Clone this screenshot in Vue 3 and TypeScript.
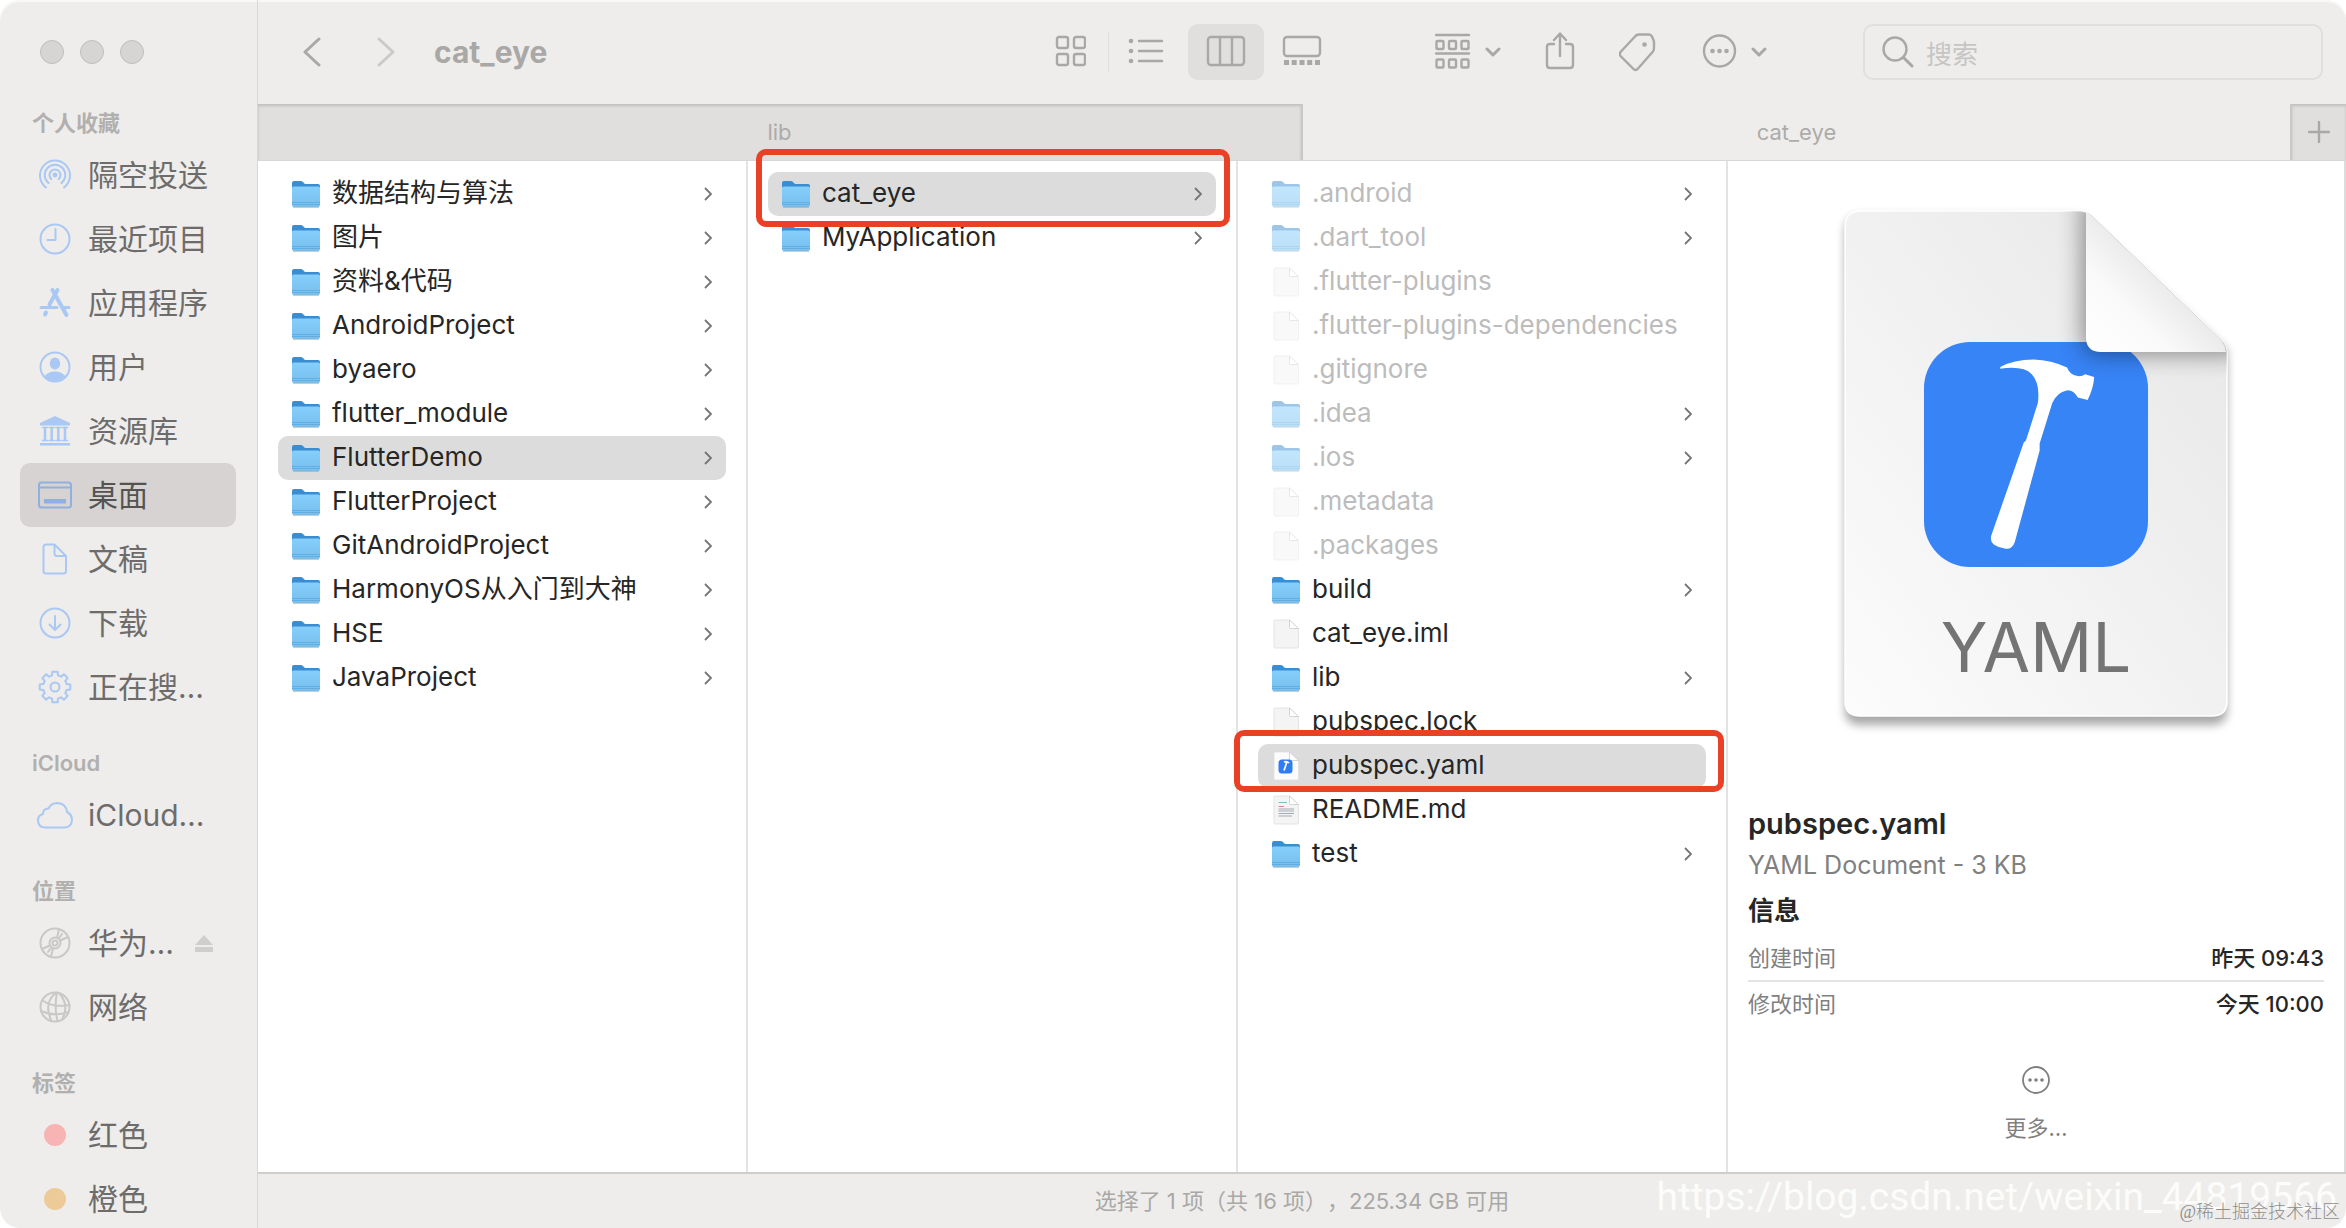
<script setup lang="ts">
import { ref } from 'vue'

interface SideItem {
  label: string
  icon: string
  tone?: 'blue' | 'gray'
  eject?: boolean
}
interface SideGroup {
  title: string
  items: SideItem[]
}
interface Entry {
  name: string
  kind: 'folder' | 'file' | 'yaml' | 'text'
  hidden?: boolean
  selected?: boolean
  mark?: 'mark-wide' | 'mark-slim'
}

// Outline of an eight-tooth gear centred in a 36x36 box
function gearPath(): string {
  const pts: string[] = []
  for (let i = 0; i < 8; i++) {
    const base = (i * Math.PI) / 4 - Math.PI / 2
    const steps: [number, number][] = [[-0.25, 12], [-0.17, 15.5], [0.17, 15.5], [0.25, 12]]
    for (const [da, r] of steps) {
      pts.push(`${(18 + r * Math.cos(base + da)).toFixed(1)} ${(18 + r * Math.sin(base + da)).toFixed(1)}`)
    }
  }
  return `M${pts.join('L')}Z`
}

const icons: Record<string, string> = {
  airdrop:
    '<path d="M9 30.5A15 15 0 1 1 27 30.5M11.5 26A10.3 10.3 0 1 1 24.500 26M14.300 22A5.500 5.500 0 1 1 21.700 22"/><circle cx="18" cy="18" r="2.400" fill="currentColor" stroke="none"/>',
  recent: '<circle cx="18" cy="18" r="14.5"/><path d="M18.500 8v11h-8"/>',
  apps:
    '<path stroke-width="4" d="M20.500 5L12.500 19.500M9 27.500L8 29.500M15.500 5L29.500 30"/><path stroke-width="3" d="M4 22.500H20M27 22.500H32"/>',
  user:
    '<circle cx="18" cy="18" r="14.5"/><ellipse cx="18" cy="14.5" rx="5.200" ry="6" fill="currentColor" stroke="none"/><path fill="currentColor" stroke="none" d="M7.500 27.500Q11 22.500 18 22.500T28.500 27.500A14.500 14.500 0 0 1 7.500 27.500Z"/>',
  library:
    '<path fill="currentColor" stroke="none" d="M18 3L33 10V12.500H3V10ZM3 30h30v2.500H3z"/><path stroke-width="2.500" d="M8 15V27M14.700 15V27M21.300 15V27M28 15V27"/><path stroke-width="1.500" d="M5.500 14.500h5M12.200 14.500h5M18.800 14.500h5M25.500 14.500h5M5.500 27.500h5M12.200 27.500h5M18.800 27.500h5M25.500 27.500h5"/>',
  desktop:
    '<rect x="2" y="5.500" width="32" height="25" rx="2.500"/><path d="M2 10.500H34"/><rect x="7" y="22" width="22" height="4.500" fill="currentColor" stroke="none"/>',
  document:
    '<path d="M9 3.500H17.500L29 15V30Q29 32.500 26.500 32.500H9Q6.500 32.500 6.500 30V6Q6.500 3.500 9 3.500ZM17.500 3.500V12.500Q17.500 15 20 15H29"/>',
  download: '<circle cx="18" cy="18" r="14.5"/><path d="M18 11V25M12.500 19.500L18 25L23.500 19.500"/>',
  gear: `<path d="${gearPath()}"/><circle cx="18" cy="18" r="4.500"/>`,
  cloud:
    '<path d="M9 30.500Q1 30.500 1 23.500Q1 18 6 17Q6 11.500 11.500 11.500Q14 6 20.500 6Q29 6.500 30 15Q35 17.500 35 23Q34.500 30.500 27 30.500Z"/>',
  disc:
    '<circle cx="18" cy="18" r="14.5"/><circle cx="18" cy="18" r="5.500"/><circle cx="18" cy="18" r="2.500"/><path d="M20 12.500L22 4.500M23 15.500L31 12M16 23.500L14 31.500M13 20.500L5 24M25 9L22.500 12.500M11 27L13.500 23.500"/>',
  globe:
    '<circle cx="18" cy="18" r="14.5"/><path d="M19 3.500Q6 14 14.500 32M20 3.500Q17 18 20.500 32M22 4Q33 16 25 30.500M5.500 11.500Q17 19 32.500 16M4 22Q17 28 31.500 23"/>',
  red: '<circle cx="18" cy="18" r="11" fill="#f8b4b3" stroke="none"/>',
  orange: '<circle cx="18" cy="18" r="11" fill="#edcb98" stroke="none"/>',
}

const groups: SideGroup[] = [
  {
    title: '个人收藏',
    items: [
      { label: '隔空投送', icon: 'airdrop' },
      { label: '最近项目', icon: 'recent' },
      { label: '应用程序', icon: 'apps' },
      { label: '用户', icon: 'user' },
      { label: '资源库', icon: 'library' },
      { label: '桌面', icon: 'desktop' },
      { label: '文稿', icon: 'document' },
      { label: '下载', icon: 'download' },
      { label: '正在搜…', icon: 'gear' },
    ],
  },
  { title: 'iCloud', items: [{ label: 'iCloud…', icon: 'cloud' }] },
  {
    title: '位置',
    items: [
      { label: '华为…', icon: 'disc', tone: 'gray', eject: true },
      { label: '网络', icon: 'globe', tone: 'gray' },
    ],
  },
  {
    title: '标签',
    items: [
      { label: '红色', icon: 'red' },
      { label: '橙色', icon: 'orange' },
    ],
  },
]

const folder = (name: string, extra: Partial<Entry> = {}): Entry => ({ name, kind: 'folder', ...extra })
const file = (name: string, extra: Partial<Entry> = {}): Entry => ({ name, kind: 'file', ...extra })

const columns: Entry[][] = [
  [
    folder('数据结构与算法'),
    folder('图片'),
    folder('资料&代码'),
    folder('AndroidProject'),
    folder('byaero'),
    folder('flutter_module'),
    folder('FlutterDemo', { selected: true }),
    folder('FlutterProject'),
    folder('GitAndroidProject'),
    folder('HarmonyOS从入门到大神'),
    folder('HSE'),
    folder('JavaProject'),
  ],
  [folder('cat_eye', { selected: true, mark: 'mark-wide' }), folder('MyApplication')],
  [
    folder('.android', { hidden: true }),
    folder('.dart_tool', { hidden: true }),
    file('.flutter-plugins', { hidden: true }),
    file('.flutter-plugins-dependencies', { hidden: true }),
    file('.gitignore', { hidden: true }),
    folder('.idea', { hidden: true }),
    folder('.ios', { hidden: true }),
    file('.metadata', { hidden: true }),
    file('.packages', { hidden: true }),
    folder('build'),
    file('cat_eye.iml'),
    folder('lib'),
    file('pubspec.lock'),
    file('pubspec.yaml', { kind: 'yaml', selected: true, mark: 'mark-slim' }),
    file('README.md', { kind: 'text' }),
    folder('test'),
  ],
]

const activePlace = ref('桌面')
const query = ref('')
</script>

<template>
  <div class="window">
    <aside class="sidebar">
      <div class="lights">
        <button class="light" aria-label="关闭"></button>
        <button class="light" aria-label="最小化"></button>
        <button class="light" aria-label="缩放"></button>
      </div>
      <nav>
        <section v-for="g in groups" :key="g.title" class="group">
          <h2 class="group-title">{{ g.title }}</h2>
          <button
            v-for="it in g.items"
            :key="it.label"
            class="place"
            :class="{ active: activePlace === it.label }"
            @click="activePlace = it.label"
          >
            <svg
              class="place-icon"
              :class="it.tone"
              viewBox="0 0 36 36"
              fill="none"
              stroke="currentColor"
              stroke-width="2"
              stroke-linecap="round"
              stroke-linejoin="round"
              v-html="icons[it.icon]"
            ></svg>
            <span>{{ it.label }}</span>
            <svg v-if="it.eject" class="eject" viewBox="0 0 18 18">
              <path d="M9 1L18 11H0ZM0 13h18v5H0z" fill="#cfcecd" />
            </svg>
          </button>
        </section>
      </nav>
    </aside>

    <main class="main">
      <header class="toolbar">
        <div class="nav">
          <button class="icon-btn" aria-label="后退">
            <svg width="18" height="30" viewBox="0 0 18 30"><path class="line" stroke-width="3" d="M16 2L2 15L16 28" /></svg>
          </button>
          <button class="icon-btn faint" aria-label="前进">
            <svg width="18" height="30" viewBox="0 0 18 30"><path class="line" stroke-width="3" d="M2 2L16 15L2 28" /></svg>
          </button>
          <h1 class="title">cat_eye</h1>
        </div>

        <div class="views">
          <button class="view" aria-label="图标">
            <svg width="32" height="34" viewBox="0 0 32 34">
              <g class="line">
                <rect x="3" y="2" width="11" height="11" rx="2" /><rect x="20" y="2" width="11" height="11" rx="2" />
                <rect x="3" y="19" width="11" height="11" rx="2" /><rect x="20" y="19" width="11" height="11" rx="2" />
              </g>
            </svg>
          </button>
          <button class="view split" aria-label="列表">
            <svg width="40" height="34" viewBox="0 0 40 34">
              <path class="line" d="M11 6H34M11 16H34M11 26H34" />
              <g fill="#a9a8a6"><circle cx="3" cy="6" r="2.3" /><circle cx="3" cy="16" r="2.3" /><circle cx="3" cy="26" r="2.3" /></g>
            </svg>
          </button>
          <button class="view on" aria-label="分栏">
            <svg width="40" height="34" viewBox="0 0 40 34">
              <rect class="line" x="2" y="2" width="36" height="28" rx="3" />
              <path class="line" d="M14 2V30M26 2V30" />
            </svg>
          </button>
          <button class="view" aria-label="画廊">
            <svg width="44" height="34" viewBox="0 0 44 34">
              <rect class="line" x="2" y="2" width="36" height="19" rx="3" />
              <path fill="#a9a8a6" d="M2 25h5v5H2zM9.700 25h5v5h-5zM17.500 25h5v5h-5zM25.200 25h5v5h-5zM33 25h5v5h-5z" />
            </svg>
          </button>
        </div>

        <div class="actions">
          <button class="icon-btn combo" aria-label="分组">
            <svg width="36" height="38" viewBox="0 0 36 38">
              <g class="line" stroke-width="2.2">
                <path d="M1 2H34M1 20.500H34" />
                <rect x="1.500" y="8" width="7" height="8" rx="1" /><rect x="14" y="8" width="7" height="8" rx="1" /><rect x="26.500" y="8" width="7" height="8" rx="1" />
                <rect x="1.500" y="26.500" width="7" height="8" rx="1" /><rect x="14" y="26.500" width="7" height="8" rx="1" /><rect x="26.500" y="26.500" width="7" height="8" rx="1" />
              </g>
            </svg>
            <svg width="16" height="12" viewBox="0 0 16 12"><path class="line" stroke-width="3" d="M2 3L8 9L14 3" /></svg>
          </button>
          <button class="icon-btn" aria-label="共享">
            <svg width="30" height="42" viewBox="0 0 30 42">
              <path class="line" d="M9 13H5Q2 13 2 16V34Q2 37 5 37H25Q28 37 28 34V16Q28 13 25 13H21M15 25V3M9 9L15 2.500L21 9" />
            </svg>
          </button>
          <button class="icon-btn" aria-label="标签">
            <svg width="38" height="40" viewBox="1 0 38 40">
              <path class="line" d="M21 2.500H31Q33 2.500 34 4.500L36 9.500V16Q36 18 35 19.500L20 36.500Q17.500 39.500 15 36.500L2.500 24Q1 22 2.500 20L17 4.500Q18.500 2.500 21 2.500Z" />
              <circle cx="26.500" cy="12.500" r="2.300" fill="#a9a8a6" />
            </svg>
          </button>
          <button class="icon-btn combo" aria-label="更多操作">
            <svg width="36" height="38" viewBox="0 0 36 38">
              <circle class="line" cx="18.500" cy="18" r="15.500" />
              <g fill="#a9a8a6"><circle cx="11.500" cy="18" r="2.300" /><circle cx="18.500" cy="18" r="2.300" /><circle cx="25.500" cy="18" r="2.300" /></g>
            </svg>
            <svg width="16" height="12" viewBox="0 0 16 12"><path class="line" stroke-width="3" d="M2 3L8 9L14 3" /></svg>
          </button>
        </div>

        <label class="search">
          <svg width="32" height="32" viewBox="0 0 32 32">
            <circle class="line" cx="13" cy="13" r="11.500" /><path class="line" stroke-width="3" d="M21.500 21.500L30 30" />
          </svg>
          <input v-model="query" type="text" placeholder="搜索" aria-label="搜索" />
        </label>
      </header>

      <div class="tabs">
        <button class="tab dim">lib</button>
        <button class="tab current">cat_eye</button>
        <button class="tab-add dim" aria-label="新标签页">
          <svg width="22" height="22" viewBox="0 0 22 22"><path class="line" stroke-width="2.600" d="M11 1V21M1 11H21" /></svg>
        </button>
      </div>

      <div class="browser">
        <ul v-for="(col, ci) in columns" :key="ci" class="column">
          <li v-for="e in col" :key="e.name" class="entry" :class="{ selected: e.selected, hidden: e.hidden }">
            <svg v-if="e.kind === 'folder'" class="entry-icon" viewBox="0 0 28 32">
              <path d="M0 5Q0 3 2 3H9Q10.500 3 11.500 4.500T14 6H26Q28 6 28 8V14H0Z" fill="#3c8cd0" />
              <path d="M0 10Q0 8.500 1.500 8.500H26.500Q28 8.500 28 10V27Q28 29 26 29H2Q0 29 0 27Z" fill="url(#folderFace)" />
              <path d="M0 24.500H28M0 26.500H28" stroke="#5aa9de" stroke-width=".8" />
              <path d="M1 29.300H27" stroke="#8a9aa6" stroke-width="1" opacity=".6" />
            </svg>
            <svg v-else class="entry-icon" viewBox="0 0 28 32">
              <path class="sheet" d="M3 2H17.500L26.500 10.500V29Q26.500 30 25.500 30H3Q2 30 2 29V3Q2 2 3 2Z" />
              <path d="M17.500 2V9.500Q17.500 10.500 18.500 10.500H26.500Z" fill="#fff" stroke="#c9c9c9" stroke-width=".8" />
              <template v-if="e.kind === 'yaml'">
                <rect x="6.500" y="9.500" width="14" height="14" rx="3.500" fill="#2f7cf6" />
                <path d="M12 12Q15 11 17 13M14.700 12.500L12 20.500" stroke="#fff" stroke-width="1.700" fill="none" />
              </template>
              <g v-if="e.kind === 'text'" stroke-width="1" fill="none">
                <path stroke="#7dbfc0" d="M6.500 8.500H15" /><path stroke="#e0819a" d="M6.500 12.500H12" />
                <path stroke="#a3a9b2" d="M6.500 15H22M6.500 17H22M6.500 19.500H22M6.500 22H20" />
              </g>
            </svg>
            <span class="entry-name">{{ e.name }}</span>
            <svg v-if="e.kind === 'folder'" class="chev" viewBox="0 0 8 14">
              <path d="M1 1L7 7L1 13" fill="none" stroke="#747474" stroke-width="1.800" />
            </svg>
            <span v-if="e.mark" class="mark" :class="e.mark"></span>
          </li>
        </ul>

        <section class="preview">
          <svg class="art" viewBox="0 0 430 548" role="img" aria-label="YAML 文稿">
            <defs>
              <linearGradient id="folderFace" x1="0" y1="0" x2="0" y2="1">
                <stop offset="0" stop-color="#86cffb" /><stop offset="1" stop-color="#76bfee" />
              </linearGradient>
              <linearGradient id="paper" x1="1" y1="0" x2="0" y2="1">
                <stop offset="0" stop-color="#e6e6e6" /><stop offset="1" stop-color="#fcfcfc" />
              </linearGradient>
              <linearGradient id="fold" x1="0" y1="1" x2="1" y2="0">
                <stop offset="0" stop-color="#ffffff" /><stop offset=".3" stop-color="#fafafa" /><stop offset=".55" stop-color="#e9e9e9" />
              </linearGradient>
              <filter id="soft" x="-20%" y="-20%" width="140%" height="140%"><feGaussianBlur stdDeviation="5" /></filter>
              <filter id="softer" x="-40%" y="-40%" width="180%" height="180%"><feGaussianBlur stdDeviation="12" /></filter>
              <clipPath id="sheetClip">
                <path d="M40 21H256Q264 21 270 25L399 149Q406 156 406 164V511Q406 526 391 526H39Q24 526 24 511V37Q24 21 40 21Z" />
              </clipPath>
            </defs>
            <path d="M40 26H260L406 160V520Q406 535 391 535H39Q24 535 24 520V42Q24 26 40 26Z" fill="#000" opacity=".34" filter="url(#soft)" />
            <path d="M40 21H256Q264 21 270 25L399 149Q406 156 406 164V511Q406 526 391 526H39Q24 526 24 511V37Q24 21 40 21Z" fill="url(#paper)" stroke="#fff" stroke-width="1.500" />
            <rect x="103" y="152" width="224" height="225" rx="46" fill="#3784f7" />
            <g clip-path="url(#sheetClip)">
              <path d="M262 0V150Q262 164 278 164H420V100Z" fill="#000" opacity=".44" filter="url(#softer)" />
            </g>
            <path d="M265 22Q268 23 272 27L398 148Q404 154 405 162H280Q265 162 265 147Z" fill="url(#fold)" />
            <g transform="translate(-42 -40) scale(.361 .3954)" fill="#fff">
              <path d="M613 549Q650 530 705 530Q755 532 798 550Q806 570 830 572Q842 572 848 567L873 574Q872 600 855 632L828 626Q815 606 797 608Q770 612 757 640L722 742L722 760L653 992Q645 1012 625 1008Q610 1007 595 998Q584 990 588 975L678 740L684 735L717 640Q724 590 700 567Q678 545 613 553Z" />
            </g>
            <text x="215" y="482" text-anchor="middle" class="art-label">YAML</text>
          </svg>

          <h3 class="doc-name">pubspec.yaml</h3>
          <p class="doc-kind">YAML Document - 3 KB</p>
          <h4 class="info-title">信息</h4>
          <dl class="info">
            <div><dt>创建时间</dt><dd>昨天 09:43</dd></div>
            <div><dt>修改时间</dt><dd>今天 10:00</dd></div>
          </dl>
          <button class="more">
            <svg width="30" height="30" viewBox="0 0 30 30">
              <circle cx="15" cy="15" r="13" fill="none" stroke="#7f7f7f" stroke-width="1.800" />
              <g fill="#7f7f7f"><circle cx="9" cy="15" r="1.800" /><circle cx="15" cy="15" r="1.800" /><circle cx="21" cy="15" r="1.800" /></g>
            </svg>
            <span>更多…</span>
          </button>
        </section>
      </div>

      <footer class="status">选择了 1 项（共 16 项），225.34 GB 可用</footer>
    </main>

    <span class="url-stamp">https://blog.csdn.net/weixin_44819566</span>
    <span class="site-stamp">@稀土掘金技术社区</span>
  </div>
</template>

<style>
html,
body {
  margin: 0;
  background: #fff;
}
</style>

<style scoped>
* {
  box-sizing: border-box;
}
h1, h2, h3, h4, p, ul, dl, dd {
  margin: 0;
  padding: 0;
}
button {
  font: inherit;
  color: inherit;
  background: none;
  border: 0;
  padding: 0;
}
svg {
  display: block;
  flex: none;
}
.window {
  position: relative;
  display: flex;
  height: 100vh;
  overflow: hidden;
  border-radius: 20px;
  background: #eeedeb;
  box-shadow: inset 0 2px 0 #f8f8f7;
  font-family: Inter, "Noto Sans CJK SC", sans-serif;
  font-size: 26px;
  color: #262626;
}
.line {
  fill: none;
  stroke: #a9a8a6;
  stroke-width: 2.4;
  stroke-linecap: round;
  stroke-linejoin: round;
}
.line[stroke-width="3"] {
  stroke-width: 3;
}

.sidebar {
  width: 258px;
  flex: none;
  overflow: hidden;
  padding: 40px 21px 0 20px;
  border-right: 1px solid #d8d7d6;
}
.lights {
  display: flex;
  gap: 16px;
  padding-left: 20px;
  margin-bottom: 15px;
}
.light {
  width: 24px;
  height: 24px;
  border-radius: 50%;
  background: #d7d5d4;
  border: 1px solid #bfbebd;
}
.group {
  padding-top: 24px;
}
.group-title {
  height: 40px;
  line-height: 40px;
  padding-left: 12px;
  font-size: 22px;
  font-weight: 600;
  color: #b1b0af;
}
.place {
  display: flex;
  align-items: center;
  gap: 15px;
  width: 100%;
  height: 64px;
  padding-left: 17px;
  border-radius: 10px;
  font-size: 30px;
  line-height: 64px;
  color: #6d6c6b;
  white-space: nowrap;
}
.place.active {
  background: #d6d3d2;
  color: #555352;
}
.place-icon {
  width: 36px;
  height: 36px;
  color: #a9c8f3;
}
.place.active .place-icon {
  color: #8fb1df;
}
.place-icon.gray {
  color: #c9c8c7;
}
.eject {
  width: 18px;
  height: 18px;
  margin: 0 23px 0 auto;
}

.main {
  flex: 1;
  min-width: 0;
  display: flex;
  flex-direction: column;
}
.toolbar {
  display: flex;
  align-items: center;
  height: 104px;
  flex: none;
  padding-right: 23px;
}
.nav {
  flex: 1;
  display: flex;
  align-items: center;
  padding-left: 45px;
}
.nav .icon-btn + .icon-btn {
  margin-left: 56px;
}
.title {
  margin-left: 39px;
  font-size: 30px;
  font-weight: 700;
  line-height: 40px;
  color: #a9a8a6;
}
.faint {
  opacity: 0.5;
}
.icon-btn {
  display: flex;
  align-items: center;
}
.combo {
  gap: 14px;
}
.views {
  display: flex;
  gap: 2px;
}
.view {
  position: relative;
  display: flex;
  align-items: center;
  justify-content: center;
  width: 76px;
  height: 56px;
  border-radius: 10px;
}
.view.on {
  background: #e0dfdd;
}
.view.split::before {
  content: "";
  position: absolute;
  left: -2px;
  top: 8px;
  width: 1px;
  height: 40px;
  background: #e0dfde;
}
.actions {
  display: flex;
  align-items: center;
  gap: 44px;
  margin: 0 96px 0 93px;
}
.search {
  display: flex;
  align-items: center;
  gap: 12px;
  width: 460px;
  height: 56px;
  padding: 0 17px;
  border: 2px solid #e0dfde;
  border-radius: 10px;
}
.search input {
  flex: 1;
  min-width: 0;
  border: 0;
  padding: 4px 0 0;
  outline: 0;
  background: none;
  font: inherit;
  color: #6d6c6b;
}
.search input::placeholder {
  color: #c6c5c4;
  opacity: 1;
}

.tabs {
  display: flex;
  flex: none;
  height: 57px;
  border-bottom: 1px solid #d8d7d6;
  font-size: 22px;
  color: #acabaa;
}
.tab {
  flex: 1044;
}
.tab.current {
  flex: 988;
  border-left: 2px solid #c9c8c7;
}
.dim {
  background: #e0dfdd;
  box-shadow: inset 0 2px 3px rgba(0, 0, 0, 0.14);
}
.tab-add {
  display: flex;
  align-items: center;
  justify-content: center;
  width: 56px;
  border-left: 2px solid #c9c8c7;
}

.browser {
  flex: 1;
  min-height: 0;
  display: grid;
  grid-template-columns: repeat(3, minmax(0, 490fr)) minmax(0, 618fr);
  background: #fff;
}
.column {
  list-style: none;
  padding: 11px 20px 0;
  border-right: 2px solid #e3e3e3;
}
.entry {
  position: relative;
  display: flex;
  align-items: center;
  gap: 12px;
  height: 44px;
  padding: 0 14px;
  border-radius: 10px;
  white-space: nowrap;
}
.entry.selected {
  background: #dcdcdc;
}
.entry-icon {
  width: 28px;
  height: 32px;
}
.sheet {
  fill: #f4f4f4;
  stroke: #dedede;
  stroke-width: 0.8;
}
.selected .sheet {
  fill: #fcfcfc;
}
.entry-name {
  flex: 1;
  line-height: 42px;
  padding-bottom: 2px;
}
.hidden .entry-name {
  color: #bcbcbc;
}
.hidden .entry-icon {
  opacity: 0.5;
}
.chev {
  width: 8px;
  height: 14px;
}
.mark {
  position: absolute;
  z-index: 2;
  border: 6px solid #ea4025;
  border-radius: 10px;
}
.mark-wide {
  inset: -23px -14px -11px -12px;
}
.mark-slim {
  inset: -14px -18px -4px -24px;
}

.preview {
  padding: 29px 20px 0;
  border-right: 2px solid #dcdcdc;
}
.art {
  width: 430px;
  height: 548px;
  margin: 0 auto 66px;
}
.art-label {
  font-size: 69px;
  fill: #747474;
}
.doc-name {
  font-size: 29px;
  line-height: 40px;
  font-weight: 600;
}
.doc-kind {
  font-size: 25px;
  line-height: 42px;
  color: #808080;
}
.info-title {
  line-height: 50px;
  font-weight: 700;
}
.info {
  font-size: 22px;
}
.info div {
  display: flex;
  justify-content: space-between;
  line-height: 44px;
}
.info div + div {
  border-top: 2px solid #e4e4e4;
}
.info dt {
  color: #808080;
}
.info dd {
  font-weight: 500;
}
.more {
  display: flex;
  flex-direction: column;
  align-items: center;
  gap: 16px;
  margin: 39px auto 0;
  font-size: 22px;
  line-height: 34px;
  color: #808080;
}
.status {
  flex: none;
  height: 56px;
  border-top: 2px solid #cfcecd;
  font-size: 22px;
  line-height: 54px;
  text-align: center;
  text-spacing-trim: space-all;
  color: #a9a8a7;
}
.url-stamp {
  position: absolute;
  right: 9px;
  bottom: 7px;
  font-family: Roboto, sans-serif;
  font-weight: 400;
  font-size: 39px;
  line-height: 48px;
  color: rgba(255, 255, 255, 0.85);
}
.site-stamp {
  position: absolute;
  right: 6px;
  bottom: 4px;
  font-family: "Liberation Serif", "Noto Sans CJK SC", sans-serif;
  font-weight: 300;
  font-size: 18px;
  line-height: 24px;
  color: #8f8e8d;
}
</style>
